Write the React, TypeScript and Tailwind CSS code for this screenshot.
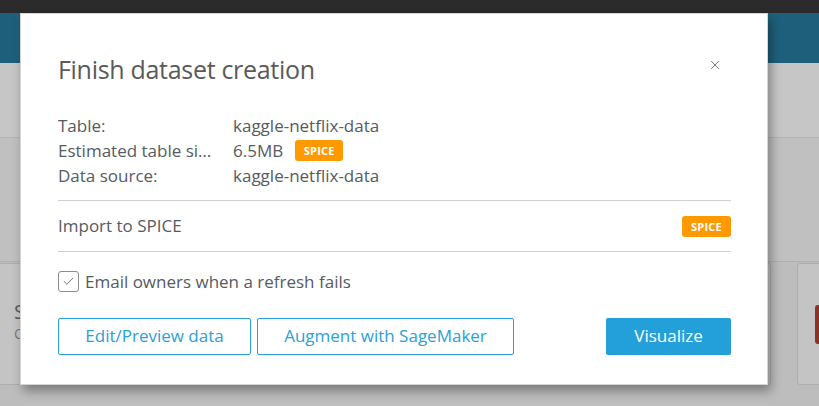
import { X, Check } from 'lucide-react';

const font = { fontFamily: '"Open Sans", "Liberation Sans", sans-serif' };

function Spice({ className = '' }: { className?: string }) {
    return (
        <span
            className={`inline-flex items-center justify-center rounded-[3px] bg-[#ff9900] text-white text-[11px] font-bold leading-none tracking-[0.2px] ${className}`}
        >
            SPICE
        </span>
    );
}

export default function App() {
    return (
        <div className="relative w-[819px] h-[406px] overflow-hidden bg-[#bdbdbd]" style={font}>
            {/* page behind the dialog, already dimmed */}
            <div className="h-[13px] bg-[#2b2b2b]" />
            <div className="h-[50px] bg-[#1e607b]" />
            <div className="h-[75px] bg-[#c6c6c6] border-b border-[#b3b3b3]" />
            <div className="h-[124px] bg-[#c0c0c0] border-b border-[#b0b0b0]" />
            <div className="flex gap-[26px] pt-[1px] h-[123px]">
                <div className="w-[773px] shrink-0 -ml-[2px] rounded-[3px] border border-[#adadad] bg-[#c4c4c4] pl-[15px] pt-[36px] text-[#5b5b5b]">
                    <div className="text-[20px] leading-[24px]">S</div>
                    <div className="text-[14px] leading-[20px] text-[#7a7a7a]">C</div>
                </div>
                <div className="flex-1 rounded-[3px] border border-[#adadad] bg-[#c4c4c4] pt-[41px] pl-[17px]">
                    <div className="w-[10px] h-[39px] rounded-l-[3px] bg-[#8a3226]" />
                </div>
            </div>

            {/* dialog */}
            <div className="absolute left-[20px] top-[13px] w-[748px] h-[372px] bg-white border border-[#d5d5d5] shadow-[3px_6px_10px_rgba(0,0,0,0.35)] pl-[37px] pr-[36px] pt-[38px]">
                <div className="flex items-start justify-between">
                    <h1 className="text-[25px] leading-[34px] text-[#5a5a5a] font-normal tracking-[-0.3px]">
                        Finish dataset creation
                    </h1>
                    <X className="w-[14px] h-[14px] text-[#666] mr-[9px] mt-[6px]" strokeWidth={1.5} />
                </div>

                <div className="mt-[27px] text-[17px] leading-[25px] text-[#555b62]">
                    <div className="flex">
                        <span className="w-[175px]">Table:</span>
                        <span>kaggle-netflix-data</span>
                    </div>
                    <div className="flex items-center">
                        <span className="w-[175px] whitespace-nowrap">Estimated table si…</span>
                        <span>6.5MB</span>
                        <Spice className="ml-[12px] w-[48px] h-[21px]" />
                    </div>
                    <div className="flex">
                        <span className="w-[175px]">Data source:</span>
                        <span>kaggle-netflix-data</span>
                    </div>
                </div>

                <div className="mt-[12px] border-t border-[#cfcfcf] h-[52px] flex items-center justify-between border-b">
                    <span className="text-[17px] text-[#555b62]">Import to SPICE</span>
                    <Spice className="w-[49px] h-[21px]" />
                </div>

                <div className="mt-[17px] flex items-center gap-[6px]">
                    <span className="w-[21px] h-[21px] rounded-[3px] border border-[#8c8c8c] flex items-center justify-center">
                        <Check className="w-[13px] h-[13px] text-[#555]" strokeWidth={1.5} />
                    </span>
                    <span className="text-[17px] text-[#555b62]">Email owners when a refresh fails</span>
                </div>

                <div className="mt-[23px] flex items-center text-[17px]">
                    <button className="w-[193px] h-[37px] rounded-[2px] border border-[#2aa0d8] text-[#2aa0d8] bg-white">
                        Edit/Preview data
                    </button>
                    <button className="ml-[6px] w-[257px] h-[37px] rounded-[2px] border border-[#2aa0d8] text-[#2aa0d8] bg-white">
                        Augment with SageMaker
                    </button>
                    <button className="ml-auto w-[125px] h-[37px] rounded-[2px] bg-[#23a0d9] text-white">
                        Visualize
                    </button>
                </div>
            </div>
        </div>
    );
}
